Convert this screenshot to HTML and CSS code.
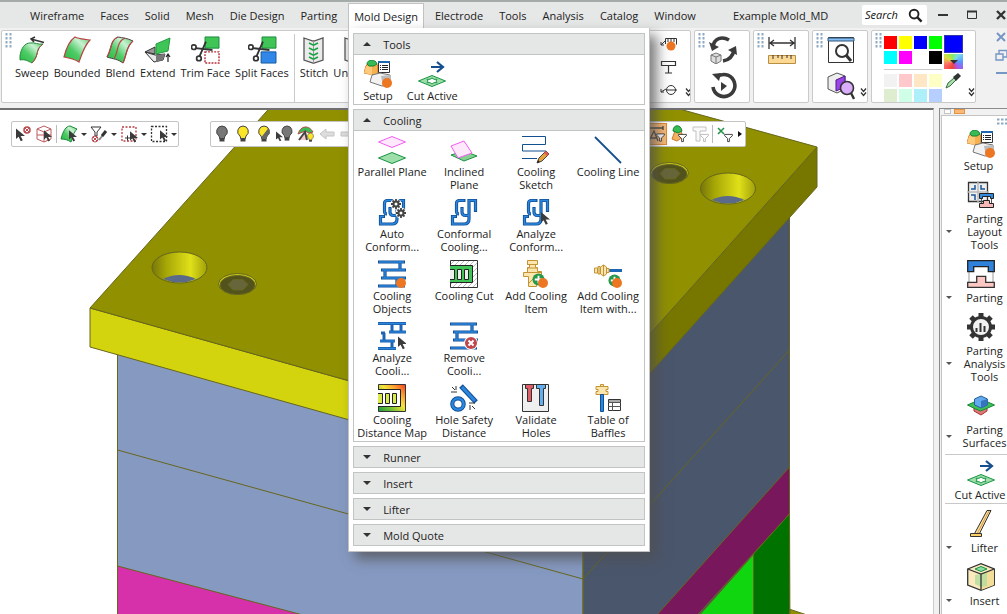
FILE: index.html
```html
<!DOCTYPE html>
<html lang="en">
<head>
<meta charset="utf-8">
<meta name="viewport" content="width=device-width, initial-scale=1">
<title>Example Mold_MD</title>
<link rel="stylesheet" href="styles.css">
</head>
<body>
<svg class="sprites" aria-hidden="true">
  <defs>
    <linearGradient id="leaf" x1="0" y1="1" x2="1" y2="0"><stop offset="0" stop-color="#25b83f"/><stop offset=".4" stop-color="#4ecb66"/><stop offset=".7" stop-color="#c8f2d1"/><stop offset="1" stop-color="#5ccb73"/></linearGradient>
    <linearGradient id="heat" x1="0" y1="1" x2="1" y2="0"><stop offset="0" stop-color="#149b3c"/><stop offset=".3" stop-color="#7cc234"/><stop offset=".55" stop-color="#f6e53a"/><stop offset=".75" stop-color="#fba030"/><stop offset="1" stop-color="#f33b22"/></linearGradient>
    <linearGradient id="bore"><stop offset="0" stop-color="#77770a"/><stop offset=".25" stop-color="#a5a506"/><stop offset=".7" stop-color="#e0e019"/><stop offset="1" stop-color="#a0a00a"/></linearGradient>
    <pattern id="hatch" width="5" height="5" patternUnits="userSpaceOnUse"><path d="M-1 6L6-1" stroke="#aaa" stroke-width=".8"/></pattern>
    <symbol id="cursor" viewBox="0 0 9 13"><path d="M0 0v10.500l2.600-2.200 2.200 4.400 2-1-2.200-4.200H9z" fill="#3b3b3b"/></symbol>
    <symbol id="sweep" viewBox="0 0 28 28"><path d="M2 20C3 12 7 7 12 7c5-1 8 2 13 1-5 4-5 6-6 10-1 4-3 7-5 9-4-2-7-4-12-3z" fill="url(#leaf)" stroke="#248b3a"/><path d="M25 8c-5 4-5 6-6 10-1 4-3 7-5 9" fill="none" stroke="#b84444"/><path d="M13 3l13 3.500M17 1l-4 2 3 3" stroke="#333" stroke-width="1.500" fill="none"/></symbol>
    <symbol id="bounded" viewBox="0 0 28 28"><path d="M1 21C3 13 6 5 12 1c4 2 9 2 15 3-6 6-8 14-11 22-5-3-9-4-15-5z" fill="url(#leaf)" stroke="#b84444" stroke-width="1.200"/></symbol>
    <symbol id="blend" viewBox="0 0 28 28"><path d="M1 21C6 13 4 4 12 1c5 1 9 1 15 4-7 6-6 13-10 22-5-4-10-4-16-6z" fill="url(#leaf)" stroke="#444"/><path d="M1 21C6 13 4 4 12 1M8 23C13 15 10 6 19 2M17 27c4-9 3-16 10-22" fill="none" stroke="#b84444" stroke-width="1.200"/></symbol>
    <symbol id="extend" viewBox="0 0 28 28"><path d="M1 16l10-5v7z" fill="#999" stroke="#333"/><path d="M1 16l10 3 10-1-2 6-9 2z" fill="#e8e8e8" stroke="#333"/><path d="M12 26v-7l9-1-2 6z" fill="#777"/><path d="M12 8L26 2l-2 13-12 3z" fill="#3fc458" stroke="#229a3d"/><path d="M24 26v-7m-2 2l2-3 2 3" stroke="#222" fill="none" stroke-width="1.200"/></symbol>
    <symbol id="scissors" viewBox="0 0 28 28"><circle cx="3" cy="12" r="2.500" fill="none" stroke="#333" stroke-width="1.800"/><circle cx="8.500" cy="24" r="2.500" fill="none" stroke="#333" stroke-width="1.800"/><path d="M5 13l18 2M9 22l7-16" stroke="#333" stroke-width="2" fill="none"/></symbol>
    <symbol id="trim" viewBox="0 0 32 30"><path d="M16 1h15v12H16z" fill="#41c456" stroke="#16893a"/><use href="#scissors" width="28" height="28" x="1"/><path d="M16 17h15v12H16z" fill="#fff" stroke="#b42c35" stroke-width="1.500" stroke-dasharray="2 1.300"/></symbol>
    <symbol id="split" viewBox="0 0 32 30"><path d="M16 1h15v12H16z" fill="#41c456" stroke="#16893a"/><use href="#scissors" width="28" height="28" x="1"/><path d="M15 17h16v12H15z" fill="#3087e8" stroke="#14569d"/></symbol>
    <symbol id="stitch" viewBox="0 0 28 28"><path d="M4 2l9 3h1l9-3v22l-9 3h-1l-9-3z" fill="#eaeaea" stroke="#555" stroke-width="1.300"/><path d="M13.500 5v22" stroke="#999"/><path d="M9 7l4 2h1l4-2M9 12l4 2h1l4-2M9 17l4 2h1l4-2M9 21l4 2h1l4-2" fill="none" stroke="#18a342" stroke-width="1.600"/></symbol>
    <symbol id="setup" viewBox="0 0 28 28"><path d="M2 6l2-3h8l2 3v9l-4 0-10-2z" fill="#f6b14f" stroke="#c86c20"/><path d="M2 6l6 1 0 8-8-2z" fill="#ffc97b"/><path d="M3 4c0-5 9-5 10 0l-3 2H5z" fill="#38ba55" stroke="#188537"/><path d="M14.500 1.500h11v11h-11z" fill="#fff" stroke="#333"/><path d="M14 2h12" stroke="#2167ac" stroke-width="2"/><path d="M16 5.500h1m1 0h6m-8 2h1m1 0h6m-8 2h1m1 0h6" stroke="#222"/><path d="M8 15l8-2 10 2v10l-8 1-12-4z" fill="#f2f2f2" stroke="#777"/><path d="M17 16l9-1v9l-7 2z" fill="#bbb"/><circle cx="23" cy="23" r="5" fill="#ed7623"/></symbol>
    <symbol id="cut" viewBox="0 0 28 28"><path d="M13 7h12M19 2l6 5-6 5" fill="none" stroke="#164f8e" stroke-width="2.200"/><path d="M.500 21L14 15.500 27.500 21 14 26.500z" fill="#9edea8" stroke="#159443"/><path d="M14 18l2 1.300h3L18 21l1 1.700h-3L14 24l-2-1.300H9L10 21l-1-1.700h3z" fill="#fff" stroke="#159443"/></symbol>
    <symbol id="parallel" viewBox="0 0 28 28"><path d="M.500 6L14 .500 27.500 6 14 11.500z" fill="#fde8fc" stroke="#f45bf1"/><path d="M.500 22L14 16.500 27.500 22 14 27.500z" fill="#9edea8" stroke="#159443"/></symbol>
    <symbol id="inclined" viewBox="0 0 28 28"><path d="M1 19l13-4 13 5-13 5z" fill="#84cf91" stroke="#159443"/><path d="M1 10l13-5 8 12-14 5z" fill="#fde8fc" stroke="#f45bf1"/></symbol>
    <symbol id="sketch" viewBox="0 0 28 28"><path d="M0 .500h23.500v8h-23V15H24M0 22.500h15" fill="none" stroke="#12508f"/><path d="M15 27l2-5 7-7 3 3-7 7z" fill="#e8a43a" stroke="#444"/><path d="M24 15l3 3-2 2-3-3z" fill="#e05c53"/><path d="M15 27l1-3 2 2z" fill="#222"/></symbol>
    <symbol id="line" viewBox="0 0 28 28"><path d="M1 1l26 26" stroke="#164f8e" stroke-width="1.800"/></symbol>
    <symbol id="coil" viewBox="0 0 28 28"><g fill="none" stroke="#114f96" stroke-width="3.200"><path d="M25.500 14V2.500H19V21q0 5-5 5H2.500V18.500H7"/><path d="M15.500 2.500H9.500q-3 0-3 3V13q0 3 2.500 3"/><path d="M12 9v5q0 3.500 3.500 3.500H19"/></g><g fill="none" stroke="#2b86de" stroke-width="1.500"><path d="M25.500 13V2.500H19V21q0 5-5 5H2.500V18.500H6"/><path d="M14.500 2.500H9.500q-3 0-3 3V13q0 3 2 3"/><path d="M12 10v4q0 3.500 3.500 3.500H19"/></g></symbol>
    <symbol id="gear" viewBox="0 0 10 10"><path d="M5 0v10M0 5h10M1.500 1.500l7 7M8.500 1.500l-7 7" stroke="#444" stroke-width="1.800"/><circle cx="5" cy="5" r="2.500" fill="#fff" stroke="#444" stroke-width="2"/></symbol>
    <symbol id="autocoil" viewBox="0 0 28 28"><use href="#coil" width="28" height="28"/><circle cx="18" cy="6" r="5.500" fill="#fff"/><circle cx="23" cy="15" r="5.500" fill="#fff"/><use href="#gear" x="13" y="1" width="10" height="10"/><use href="#gear" x="18" y="10" width="10" height="10"/></symbol>
    <symbol id="anacoil" viewBox="0 0 28 28"><use href="#coil" width="28" height="28"/><use href="#cursor" x="19" y="14" width="9" height="13"/></symbol>
    <symbol id="pipes" viewBox="0 0 28 28"><path d="M0 2h27M3 10h25M3 18h25M0 26h27M22 2v8M7 10v8M19 18v8" stroke="#114f96" stroke-width="3.200" fill="none"/><path d="M1 2h25M4 10h23M4 18h23M1 26h25M22 2v8M7 10v8M19 18v8" stroke="#2b86de" stroke-width="1.400" fill="none"/></symbol>
    <symbol id="objects" viewBox="0 0 28 28"><use href="#pipes" width="28" height="28"/><circle cx="23" cy="23" r="5" fill="#ed7623"/></symbol>
    <symbol id="anapipes" viewBox="0 0 28 28"><path d="M0 1.500h28M11 10h17M2 19h15M0 26.500h18M23 2v8M14 2v8M6 11v8M14 19v8M3 11h4" stroke="#1d65b3" stroke-width="3" fill="none"/><path d="M0 1.500h28M11 10h17M2 19h15M0 26.500h18" stroke="#2b86de" stroke-width="1"/><use href="#cursor" x="20" y="14" width="9" height="14"/></symbol>
    <symbol id="rempipes" viewBox="0 0 28 28"><use href="#pipes" width="28" height="28"/><circle cx="21" cy="21" r="7" fill="#fff"/><circle cx="21" cy="21" r="6" fill="#be474c"/><path d="M18.500 18.500l5 5m0-5l-5 5" stroke="#fff" stroke-width="2"/></symbol>
    <symbol id="coolcut" viewBox="0 0 28 28"><path d="M.500.500h27v27H.500z" fill="#fff"/><path d="M.500.500h27v27H.500z" fill="url(#hatch)" stroke="#333"/><path d="M0 5.500h22.500v17H0" fill="#41c456" stroke="#222"/><path d="M0 9.500h4.500v10H0M7.500 9.500h4v10h-4zM14.500 9.500h4v10h-4z" fill="#eee" stroke="#222"/></symbol>
    <symbol id="plus" viewBox="0 0 14 14"><circle cx="7" cy="7" r="6.500" fill="#28974a"/><path d="M7 3v8M3 7h8" stroke="#fff" stroke-width="2"/></symbol>
    <symbol id="additem" viewBox="0 0 28 28"><path d="M5.500.500h10v4h-2v3h2v4h4v5h-5v10h-8v-10h-5v-4h4v-5h2v-3h-2z" fill="#fbe6b0" stroke="#c39333"/><path d="M5 4.500h10M5 8h10M2 12.500h17M7 23l7-7" stroke="#c39333"/><use href="#plus" x="10" y="13" width="13" height="13"/><circle cx="21" cy="23" r="5" fill="#ed7623"/></symbol>
    <symbol id="addwith" viewBox="0 0 28 28"><path d="M14 10.500h14" stroke="#1d66b5" stroke-width="3"/><path d="M.500 8h3v5h-3zM4 6.500h2V14H4zM7 8.500h8v4H7z" fill="#fbe6b0" stroke="#c39333"/><path d="M6.500 7l3-2 3 2v7l-3 2-3-2z" fill="#fbe6b0" stroke="#c39333"/><path d="M9.500 5v11" stroke="#c39333"/><use href="#plus" x="14" y="14" width="13" height="13"/><circle cx="23" cy="23" r="5" fill="#ed7623"/></symbol>
    <symbol id="distmap" viewBox="0 0 28 28"><path d="M.500.500h27v27H.500z" fill="url(#heat)" stroke="#333"/><path d="M0 5.500h22.500v17H0" fill="#fff" stroke="#222"/><path d="M0 9.500h4.500v10H0M7.500 9.500h4v10h-4zM14.500 9.500h4v10h-4z" fill="#dbe94a" stroke="#222"/></symbol>
    <symbol id="safety" viewBox="0 0 28 28"><path d="M11 2l15 16" stroke="#114f96" stroke-width="5"/><path d="M12 3l13 14" stroke="#2b86de" stroke-width="3"/><circle cx="8" cy="20" r="5.700" fill="#fff" stroke="#114f96" stroke-width="4.200"/><circle cx="8" cy="20" r="5.700" fill="none" stroke="#2b86de" stroke-width="2.300"/><path d="M1 8h6M6 2v4M2 3l3 3M19 19h6M20 21v5M22 22l3 3" stroke="#333"/></symbol>
    <symbol id="validate" viewBox="0 0 28 28"><path d="M.500.500h26v27H.500z" fill="#efefef" stroke="#333"/><path d="M3.500.500h8v4h-2v13h-4V4.500h-2z" fill="#de5d67" stroke="#333"/><path d="M14.500.500h9v4h-2v17h-4v-17h-3z" fill="#64aeed" stroke="#333"/></symbol>
    <symbol id="baffles" viewBox="0 0 28 28"><path d="M2 2.500h12v3h-2v2h2v3H2v-3h2v-2H2zM6.500.500h3v2h-3z" fill="#fbe6b0" stroke="#c39333"/><path d="M6.500 10.500h3v17h-3z" fill="#2b86de" stroke="#114f96"/><path d="M14.500 15.500h12v11h-12z" fill="#fff" stroke="#333"/><path d="M15 17h11" stroke="#aaa" stroke-width="2"/><path d="M14 18.500h13M14 22.500h13M18.500 18v9" stroke="#555"/></symbol>
    <symbol id="layout" viewBox="0 0 28 28"><path d="M1.500 1.500h19v19h-19z" fill="#eee" stroke="#333" stroke-width="1.300"/><path d="M11 0v22M0 11h22" stroke="#bbb" stroke-width="1.500"/><path d="M4 8h4V4M14 4v4h4M4 14h4v5" stroke="#1b5796" stroke-width="1.500" fill="none"/><path d="M12.500 12.500h14v5h-3v-2h-8v2h-3z" fill="#338be0" stroke="#222"/><path d="M14.500 18v4m10-4v4" stroke="#555"/><path d="M12.500 26.500v-4h4v-3h6v3h4v4z" fill="#f9b8b8" stroke="#222"/></symbol>
    <symbol id="parting" viewBox="0 0 28 28"><path d="M2 12v11M26 12v11" stroke="#999"/><path d="M.700.700h26.600v11h-6v-5H6.700v5h-6z" fill="#2f82dc" stroke="#222" stroke-width="1.300"/><path d="M.700 27.300v-5h9v-6h9v6h8.600v5z" fill="#fdc7c3" stroke="#333" stroke-width="1.300"/></symbol>
    <symbol id="analysis" viewBox="0 0 28 28"><path d="M14 0v28M0 14h28M4 4l20 20M24 4L4 24" stroke="#333" stroke-width="5"/><circle cx="14" cy="14" r="9.500" fill="#f2f2f2" stroke="#333" stroke-width="3"/><path d="M9.500 15v4M13.500 10v9M17.500 13v6" stroke="#333" stroke-width="2"/></symbol>
    <symbol id="surfaces" viewBox="0 0 28 28"><path d="M7 15h13v4l-6 4-7-4z" fill="#e47776" stroke="#a33"/><path d="M.500 13l9-4h9l9 4-9 4-5 2-5-2z" fill="#3fbf57" stroke="#188636"/><path d="M7.500 7l6.500-3 6.500 3v6L14 16l-6.500-3z" fill="#63a9ed" stroke="#285f9c"/><path d="M14 9v7l6.500-3V7z" fill="#3476bd"/></symbol>
    <symbol id="lifter" viewBox="0 0 28 28"><path d="M20 .500h4L12 24.500H7z" fill="#fcdc9b" stroke="#333"/><path d="M22 1L10 24" stroke="#d39d47"/><path d="M3.500 23.500h11v3h-11z" fill="#ffcf67" stroke="#333"/></symbol>
    <symbol id="insert" viewBox="0 0 28 28"><path d="M.700 6L14 .700 27.300 6v16L14 27.300.700 22z" fill="#fceabf" stroke="#333" stroke-width="1.300"/><path d="M14 11v16L27 22V6z" fill="#f4dd98"/><path d="M8 12l6-1 6-2v14l-6 1-6-3z" fill="#b4dda0" opacity=".85"/><path d="M.700 6L14 11l13.300-5M14 11v16" stroke="#333" fill="none" stroke-width="1.300"/><path d="M8 6l6-2.500L20 6l-6 2.500z" fill="#8cdba0" stroke="#17964a"/></symbol>
    <symbol id="bulb" viewBox="0 0 16 18"><path d="M8 1a5.500 5.500 0 0 0-3 10l1 3h4l1-3A5.500 5.500 0 0 0 8 1z" fill="currentColor" stroke="#444"/><path d="M5.500 13h5v3.500h-5z" fill="#444"/></symbol>
    <symbol id="funnel" viewBox="0 0 10 10"><path d="M.700 1h8.600v1.500L6 5.500V9H4V5.500L.700 2.500z" fill="#fff" stroke="#333"/></symbol>
    <symbol id="chevrons" viewBox="0 0 7 9"><path d="M1 .500l2.500 3L6 .500M1 4.500l2.500 3 2.500-3" stroke="#333" stroke-width="1.300" fill="none"/></symbol>
    <symbol id="grip" viewBox="0 0 7 15"><path d="M1.500 0v15M5.500 0v15" stroke="#8daac2" stroke-width="2" stroke-dasharray="2.500 1.500"/></symbol>
    <symbol id="lens" viewBox="0 0 16 16"><circle cx="6.500" cy="6.500" r="4.700" fill="none" stroke="currentColor" stroke-width="2"/><path d="M10 10l4.500 4.500" stroke="currentColor" stroke-width="2.500"/></symbol>
  </defs>
</svg>

<div class="app">
  <header class="titlebar">
    <nav class="menu" aria-label="Main menu">
      <button>Wireframe</button><button>Faces</button><button>Solid</button><button>Mesh</button><button>Die Design</button><button>Parting</button>
      <div class="menu-open">
        <button class="active" aria-expanded="true">Mold Design</button>
        <div class="dropdown">
          <section class="panel">
            <button class="panel-head" aria-expanded="true"><i class="tri up"></i>Tools</button>
            <div class="panel-body tools-row">
              <button class="tool"><svg><use href="#setup"/></svg>Setup</button>
              <button class="tool"><svg><use href="#cut"/></svg>Cut Active</button>
            </div>
          </section>
          <section class="panel">
            <button class="panel-head" aria-expanded="true"><i class="tri up"></i>Cooling</button>
            <div class="panel-body tool-grid">
              <button class="tool"><svg><use href="#parallel"/></svg>Parallel Plane</button>
              <button class="tool"><svg><use href="#inclined"/></svg>Inclined<br>Plane</button>
              <button class="tool"><svg><use href="#sketch"/></svg>Cooling<br>Sketch</button>
              <button class="tool"><svg><use href="#line"/></svg>Cooling Line</button>
              <button class="tool"><svg><use href="#autocoil"/></svg>Auto<br>Conform...</button>
              <button class="tool"><svg><use href="#coil"/></svg>Conformal<br>Cooling...</button>
              <button class="tool"><svg><use href="#anacoil"/></svg>Analyze<br>Conform...</button>
              <button class="tool first"><svg><use href="#objects"/></svg>Cooling<br>Objects</button>
              <button class="tool"><svg><use href="#coolcut"/></svg>Cooling Cut</button>
              <button class="tool"><svg><use href="#additem"/></svg>Add Cooling<br>Item</button>
              <button class="tool"><svg><use href="#addwith"/></svg>Add Cooling<br>Item with...</button>
              <button class="tool"><svg><use href="#anapipes"/></svg>Analyze<br>Cooli...</button>
              <button class="tool"><svg><use href="#rempipes"/></svg>Remove<br>Cooli...</button>
              <button class="tool first"><svg><use href="#distmap"/></svg>Cooling<br>Distance Map</button>
              <button class="tool"><svg><use href="#safety"/></svg>Hole Safety<br>Distance</button>
              <button class="tool"><svg><use href="#validate"/></svg>Validate<br>Holes</button>
              <button class="tool"><svg><use href="#baffles"/></svg>Table of<br>Baffles</button>
            </div>
          </section>
          <button class="panel-head"><i class="tri"></i>Runner</button>
          <button class="panel-head"><i class="tri"></i>Insert</button>
          <button class="panel-head"><i class="tri"></i>Lifter</button>
          <button class="panel-head"><i class="tri"></i>Mold Quote</button>
        </div>
      </div>
      <button>Electrode</button><button>Tools</button><button>Analysis</button><button>Catalog</button><button>Window</button>
    </nav>
    <span class="doc-title">Example Mold_MD</span>
    <label class="search"><input type="text" placeholder="Search" aria-label="Search"><svg><use href="#lens"/></svg></label>
    <div class="window-buttons">
      <button aria-label="Minimize"><svg viewBox="0 0 12 12"><path d="M1 6h10" stroke="#333" stroke-width="2"/></svg></button>
      <button aria-label="Maximize"><svg viewBox="0 0 12 12"><path d="M1.500 2.500h9v7h-9z" fill="none" stroke="#333"/><path d="M1 2.500h10" stroke="#333" stroke-width="2"/></svg></button>
      <button aria-label="Close"><svg viewBox="0 0 12 12"><path d="M2 2l8 8m0-8l-8 8" stroke="#333" stroke-width="2.400"/></svg></button>
    </div>
  </header>

  <div class="ribbon">
    <div class="group faces">
      <svg class="grip"><use href="#grip"/></svg>
      <button class="tool"><svg><use href="#sweep"/></svg>Sweep</button>
      <button class="tool"><svg><use href="#bounded"/></svg>Bounded</button>
      <button class="tool"><svg><use href="#blend"/></svg>Blend</button>
      <button class="tool"><svg><use href="#extend"/></svg>Extend</button>
      <button class="tool"><svg class="wide"><use href="#trim"/></svg>Trim Face</button>
      <button class="tool"><svg class="wide"><use href="#split"/></svg>Split Faces</button>
      <span class="rule"></span>
      <button class="tool"><svg><use href="#stitch"/></svg>Stitch</button>
      <button class="tool"><svg><use href="#stitch"/></svg>Unstitch</button>
    </div>
    <div class="group notes">
      <div class="stack notes-stack">
        <button aria-label="Dimension"><svg viewBox="0 0 12 18"><path d="M8 2v14M0 8h8M4 5l4 3-4 3" stroke="#666" fill="none" stroke-width="1.500"/></svg></button>
        <button aria-label="Text"><svg viewBox="0 0 12 28"><path d="M0 2h10" stroke="#3e89cb" stroke-width="2"/><path d="M0 27L5 9l4 18z" fill="#444"/></svg></button>
      </div>
      <div class="stack notes-stack">
        <button aria-label="Note"><svg viewBox="0 0 17 16"><path d="M5.500 8V2.500h11v6M8 3v3m3-3v3m3-3v3M6 4L1 9m0-3v3h3" fill="none" stroke="#333"/><circle cx="11" cy="10" r="4.500" fill="#ed7623"/></svg></button>
        <button aria-label="Label"><svg viewBox="0 0 17 16"><path d="M1.500 2.500h14v4h-14zM8.500 7v7M5 14h7" fill="#fff" stroke="#333" stroke-width="1.200"/></svg></button>
        <button aria-label="Balloon"><svg viewBox="0 0 17 16"><circle cx="11" cy="8" r="4.500" fill="#fff" stroke="#333"/><path d="M6 8h11M6 7l-5 3m0-3v3h3" stroke="#333" fill="none"/></svg></button>
      </div>
      <svg class="more"><use href="#chevrons"/></svg>
    </div>
    <div class="group small">
      <svg class="grip"><use href="#grip"/></svg>
      <div class="stack">
        <button aria-label="Rotate view"><svg viewBox="0 0 28 28"><path d="M4 11C5 2 13 0 20 4M25 14c-1 6-5 10-11 11" stroke="#3b3b3b" stroke-width="3.600" fill="none"/><path d="M0 6l3 9 7-4zM19 14l8-4 1 9z" fill="#3b3b3b"/><path d="M2 19l5-2 5 2v6l-5 3-5-3z" fill="#ddd" stroke="#777"/><path d="M2 19l5 2 5-2M7 21v7" stroke="#777" fill="none"/></svg></button>
        <button aria-label="Regenerate"><svg viewBox="0 0 28 28"><path d="M8 5a11 11 0 1 1-4 10" stroke="#3b3b3b" stroke-width="3.600" fill="none"/><path d="M3 2l9-1-2 8z" fill="#3b3b3b"/><path d="M12 10l6 4-6 5z" fill="#3b3b3b"/></svg></button>
      </div>
    </div>
    <div class="group small">
      <svg class="grip"><use href="#grip"/></svg>
      <div class="stack">
        <button aria-label="Measure"><svg viewBox="0 0 28 28"><path d="M1 1v12M27 1v12M2 7h24M6 4L2 7l4 3M22 4l4 3-4 3" stroke="#333" stroke-width="1.300" fill="none"/><path d="M.500 19.500h27v8H.500z" fill="#fbd894" stroke="#b98f41"/><path d="M5 19v4m5-4v3m4-3v4m5-4v3m4-3v4" stroke="#333"/></svg></button>
      </div>
    </div>
    <div class="group small">
      <svg class="grip"><use href="#grip"/></svg>
      <div class="stack">
        <button aria-label="Zoom window"><svg viewBox="0 0 28 28"><path d="M1.500 1.500h25v25h-25z" fill="#fff" stroke="#333"/><path d="M1 2h26v3H1z" fill="#86bdf4" stroke="#357"/><circle cx="15" cy="15" r="6" fill="#fff" stroke="#333" stroke-width="2"/><path d="M19 19l5 6" stroke="#333" stroke-width="3"/></svg></button>
        <button aria-label="Inspect"><svg viewBox="0 0 28 28"><path d="M1 5l9-4 8 3v13l-8 4-9-4z" fill="#ededed" stroke="#555"/><path d="M9 8l9-4v11l-9 4z" fill="#9a44e8" stroke="#4f1b87"/><circle cx="20" cy="16" r="6.500" fill="#d9adfa" stroke="#333" stroke-width="1.600"/><path d="M24 21l3 6" stroke="#333" stroke-width="2.400"/></svg></button>
      </div>
      <svg class="more"><use href="#chevrons"/></svg>
    </div>
    <div class="group colors">
      <svg class="grip"><use href="#grip"/></svg>
      <div class="palette">
        <button class="red" aria-label="Red"></button><button class="yellow" aria-label="Yellow"></button><button class="blue" aria-label="Blue"></button><button class="green" aria-label="Green"></button>
        <button class="cyan" aria-label="Cyan"></button><button class="magenta" aria-label="Magenta"></button><button class="white" aria-label="White"></button><button class="black" aria-label="Black"></button>
        <span class="palette-rule"></span>
        <button class="p1" aria-label="Pale gray"></button><button class="p2" aria-label="Pale red"></button><button class="p3" aria-label="Pale orange"></button><button class="p4" aria-label="Pale yellow"></button>
        <button class="p5" aria-label="Pale olive"></button><button class="p6" aria-label="Pale green"></button><button class="p7" aria-label="Pale cyan"></button><button class="p8" aria-label="Pale blue"></button>
      </div>
      <div class="current">
        <button class="chosen" aria-label="Current color"></button>
        <button class="wheel" aria-label="More colors"><i class="tri"></i></button>
        <button class="dropper" aria-label="Pick color"><svg viewBox="0 0 16 16"><path d="M1 15l2-5 6-5 2 2-6 6z" fill="#a9ddad" stroke="#38713d"/><path d="M8 4l5-4 3 3-5 5z" fill="#333"/></svg></button>
      </div>
      <svg class="more"><use href="#chevrons"/></svg>
    </div>
    <div class="mdi">
      <button aria-label="Close document"><svg viewBox="0 0 12 12"><path d="M2 2l8 8m0-8l-8 8" stroke="#7696c4" stroke-width="2"/></svg></button>
      <button aria-label="Restore document"><svg viewBox="0 0 12 12"><path d="M1 5h7v6H1zM4 5V1.500h8V8H8" stroke="#7696c4" stroke-width="1.400" fill="none"/></svg></button>
      <button aria-label="Minimize document"><svg viewBox="0 0 12 12"><path d="M1 6h11" stroke="#7696c4" stroke-width="2"/></svg></button>
    </div>
  </div>

  <div class="workspace">
    <main class="viewport">
      <svg class="scene" viewBox="0 110 933 504" preserveAspectRatio="xMinYMin slice" role="img" aria-label="Mold model">
        <g stroke="#66661e" stroke-width="1">
          <path d="M780 606l27 9h-27z" fill="#909000"/>
          <path d="M117.500 340V640h466V480z" fill="#8699c1"/>
          <path d="M583 430L789.500 200V640H583z" fill="#4a566c"/>
          <path d="M789.500 467L630 645h40L789.500 514z" fill="#78175c"/>
          <path d="M789.500 514L680 637h110z" fill="#0fd60f"/>
          <path d="M789.500 514L753.500 554v90h36z" fill="#007200"/>
          <path d="M117.500 566V640h280z" fill="#d631ab"/>
          <path d="M117.500 450L583 579 789.500 350M583 480v140" fill="none"/>
          <path d="M90 308L556 439v39L90 347z" fill="#d4d40e"/>
          <path d="M556 439L817 147v40L556 478z" fill="#777700"/>
          <path d="M90 308L275 102H654L817 147 556 439z" fill="#909000"/>
          <ellipse cx="179.500" cy="267.500" rx="27.500" ry="15.500" fill="url(#bore)"/>
          <path d="M163 279q16-8 33 0-16 7-33 0z" fill="#5b6a88" stroke="none"/>
          <ellipse cx="728" cy="188.500" rx="27.500" ry="15.500" fill="url(#bore)"/>
          <path d="M711.500 200q16-8 33 0-16 7-33 0z" fill="#5b6a88" stroke="none"/>
          <g id="screw"><ellipse cx="237.500" cy="284" rx="19" ry="10.500" fill="#c9c91a"/><ellipse cx="237.500" cy="285" rx="17.500" ry="9.500" fill="#52521c"/><path d="M228 284.500l5-5h10l5 5-5 5.500h-10z" fill="#66663a"/></g>
          <use href="#screw" x="432" y="-111"/>
        </g>
      </svg>
      <div class="overlay">
        <div class="floatbar select-bar">
          <button aria-label="Pick"><svg viewBox="0 0 18 18"><use href="#cursor" x="2" y="3" width="9" height="14"/><circle cx="13" cy="5" r="3" fill="#fff" stroke="#b94b50" stroke-width="1.500"/><path d="M11 3l4 4m0-4l-4 4" stroke="#b94b50"/></svg></button>
          <button class="boxed" aria-label="Pick entity"><svg viewBox="0 0 18 18"><path d="M2 4l7-3 7 3v10l-7 3-7-3zM2 4l7 3 7-3M9 7v10M2 10h14" fill="none" stroke="#be5a60"/><use href="#cursor" x="9" y="5" width="8" height="12"/></svg></button>
          <button class="drop" aria-label="Pick faces"><svg viewBox="0 0 18 18"><path d="M1 14C3 6 6 1 10 1l7 3c-4 4-4 8-6 13-3-2-6-3-10-3z" fill="url(#leaf)" stroke="#1b8838"/><use href="#cursor" x="9" y="5" width="8" height="12"/></svg><i class="tri"></i></button>
          <button class="drop" aria-label="Filter"><svg viewBox="0 0 18 18"><path d="M1 2h10L7 7v4H5V7z" fill="#fff" stroke="#333"/><circle cx="5" cy="14" r="3" fill="none" stroke="#b94b50"/><path d="M3 12l4 4m0-4l-4 4" stroke="#b94b50"/><path d="M9 15l4-5" stroke="#888" stroke-width="2"/><path d="M12 11l4-5" stroke="#333" stroke-width="3"/></svg><i class="tri"></i></button>
          <button class="drop" aria-label="Add by window"><svg viewBox="0 0 18 18"><path d="M2 2h14v14H2z" fill="none" stroke="#b93b40" stroke-width="1.300" stroke-dasharray="2 1.500"/><path d="M5 13h5M7.500 10.500v5" stroke="#333"/><use href="#cursor" x="10" y="6" width="8" height="12"/></svg><i class="tri"></i></button>
          <button class="drop" aria-label="Pick by window"><svg viewBox="0 0 18 18"><path d="M1.500 1.500h15v15h-15z" fill="none" stroke="#333" stroke-width="1.300" stroke-dasharray="2 1.500"/><use href="#cursor" x="10" y="5" width="8" height="12"/></svg><i class="tri"></i></button>
        </div>
        <div class="floatbar show-bar">
          <button class="off" aria-label="Hide"><svg><use href="#bulb"/></svg></button>
          <button class="on" aria-label="Show"><svg><use href="#bulb"/></svg></button>
          <button class="on" aria-label="Toggle"><svg viewBox="0 0 16 18"><use href="#bulb" width="16" height="18"/><path d="M12.500 3l-7 9 1 2h4l1-3q4-3 1-8z" fill="#666"/></svg></button>
          <button class="off" aria-label="Hide picked"><svg viewBox="0 0 18 18"><use href="#bulb" x="3" width="16" height="17"/><use href="#cursor" x="0" y="6" width="7" height="11"/></svg></button>
          <button class="on" aria-label="Show all"><svg viewBox="0 0 18 18"><path d="M1 9C4 0 12 0 16 7L12 8 8 6z" fill="#3bbd56" stroke="#bd4444"/><path d="M2 15l6-8 2 8" stroke="#444" stroke-width="2" fill="#f3cccc"/><use href="#bulb" x="9" y="7" width="9" height="11"/></svg></button>
          <button aria-label="Previous"><svg viewBox="0 0 18 18"><path d="M2 9l6-5v3h8v4H8v3z" fill="#ddd" stroke="#c4c4c4"/></svg></button>
          <button aria-label="Next"><svg viewBox="0 0 18 18"><path d="M2 7h14v4H2z" fill="#ddd" stroke="#c4c4c4"/></svg></button>
          <span class="fill"></span>
          <button class="picked" aria-label="Filter text"><svg viewBox="0 0 18 18"><path d="M2 1v4m14-4v4M2 3h14M2 16L7 6l4 10M4 13h6" stroke="#444" fill="none" stroke-width="1.300"/><use href="#funnel" x="9" y="8" width="9" height="9"/></svg></button>
          <button aria-label="Filter parts"><svg viewBox="0 0 18 18"><path d="M2 14l3-8h6l2 6-6 4z" fill="#f3b263" stroke="#ce782b"/><path d="M3 6c0-7 8-7 9 0l-4 2z" fill="#38ba55" stroke="#188537"/><use href="#funnel" x="8" y="8" width="9" height="10"/></svg></button>
          <button class="faded" aria-label="Filter sections"><svg viewBox="0 0 18 18"><path d="M2 2h13v4H9v10H5V6H2z" fill="#eee" stroke="#555"/><use href="#funnel" x="9" y="8" width="9" height="10"/></svg></button>
          <span class="bar-rule"></span>
          <button aria-label="Filter points"><svg viewBox="0 0 18 18"><path d="M2 3l6 6m0-6L2 9" stroke="#209344" stroke-width="1.500"/><use href="#funnel" x="8" y="8" width="9" height="10"/></svg></button>
          <i class="tri side"></i>
        </div>
      </div>
    </main>
    <aside class="sidebar">
      <div class="side-tabs"><i></i><i class="lit"></i></div>
      <div class="side-panel">
        <svg class="side-grip" viewBox="0 0 10 8"><path d="M0 1.500h10M0 5.500h10" stroke="#8daac2" stroke-width="2" stroke-dasharray="2.500 1.500"/></svg>
        <button class="side-tool plain"><svg><use href="#setup"/></svg><span>Setup</span></button>
        <button class="side-tool"><svg><use href="#layout"/></svg><span>Parting<br>Layout<br>Tools</span><i class="tri"></i></button>
        <button class="side-tool"><svg><use href="#parting"/></svg><span>Parting</span><i class="tri"></i></button>
        <button class="side-tool"><svg><use href="#analysis"/></svg><span>Parting<br>Analysis<br>Tools</span><i class="tri"></i></button>
        <button class="side-tool"><svg><use href="#surfaces"/></svg><span>Parting<br>Surfaces</span><i class="tri"></i></button>
        <button class="side-tool plain ruled"><svg><use href="#cut"/></svg><span>Cut Active</span></button>
        <button class="side-tool"><svg><use href="#lifter"/></svg><span>Lifter</span><i class="tri"></i></button>
        <button class="side-tool"><svg><use href="#insert"/></svg><span>Insert</span><i class="tri"></i></button>
      </div>
    </aside>
  </div>
</div>
</body>
</html>
```
FILE: styles.css
```css
* { box-sizing: border-box; }

body {
  margin: 0;
  font: 11px/13px "Open Sans", "Noto Sans", sans-serif;
  color: #222;
  background: #f1f1f2;
}

button {
  margin: 0;
  padding: 0;
  border: 0;
  background: none;
  color: inherit;
  font: inherit;
  white-space: nowrap;
}

svg { display: block; flex: none; }
.sprites { position: absolute; width: 0; height: 0; }

.app {
  display: flex;
  flex-direction: column;
  height: 100vh;
  overflow: hidden;
}

.tri {
  display: block;
  flex: none;
  border: 4px solid transparent;
  border-top-color: #333;
  border-bottom: 0;
}
.tri.up {
  border-top: 0;
  border-bottom: 4px solid #333;
}

/* Title bar */
.titlebar {
  display: flex;
  flex: none;
  height: 28px;
  background: #e6e8e7;
  border-top: 2px solid #a5aba9;
}
.menu {
  display: flex;
  gap: 6px;
  padding: 1px 0 0 25px;
}
.menu > button, .menu-open > button {
  height: 25px;
  padding: 0 4px;
  border: 1px solid transparent;
}
.menu-open { position: relative; }
.menu-open > .active {
  padding: 0 5px;
  background: #fff;
  border-color: #c2c2c2;
  border-bottom: 0;
}
.doc-title {
  margin-left: 32px;
  padding-top: 7px;
  white-space: nowrap;
}
.search {
  display: flex;
  align-items: center;
  width: 65px;
  height: 20px;
  margin: 3px 10px 0 auto;
  padding: 0 4px 0 3px;
  background: #fff;
  border-radius: 2px;
}
.search input {
  flex: 1;
  min-width: 0;
  padding: 0;
  border: 0;
  outline: 0;
  font: italic 11px/16px "Open Sans", "Noto Sans", sans-serif;
}
.search input::placeholder { color: #111; opacity: 1; }
.search svg { width: 15px; height: 15px; }
.window-buttons {
  display: flex;
  gap: 17px;
  height: 26px;
}
.window-buttons svg { width: 12px; height: 12px; }

/* Mold Design menu */
.dropdown {
  position: absolute;
  z-index: 5;
  top: 25px;
  left: 0;
  display: flex;
  flex-direction: column;
  gap: 4px;
  width: 302px;
  padding: 5px 4px;
  background: #fff;
  border: 1px solid #c2c2c2;
  border-top: 0;
  box-shadow: 7px 7px 12px rgba(80, 80, 80, .75);
}
.panel-head {
  display: flex;
  align-items: center;
  gap: 12px;
  width: 100%;
  height: 22px;
  padding-left: 9px;
  background: #e5e7e6;
  border: 1px solid #c2c4c3;
}
.panel-body {
  padding: 5px 1px 2px 2px;
  border: 1px solid #c2c4c3;
  border-top: 0;
}
.tools-row { display: flex; gap: 14px; padding-left: 9px; }
.tool-grid {
  display: grid;
  grid-template-columns: repeat(4, 72px);
  grid-auto-rows: 55px;
  row-gap: 7px;
}
.tool-grid .first { grid-column: 1; }
.tool {
  display: block;
  align-self: start;
  text-align: center;
}
.tool svg { width: 28px; height: 28px; margin: 0 auto 1px; }
.tool-grid .tool { width: 72px; }

/* Ribbon */
.ribbon {
  display: flex;
  flex: none;
  gap: 3px;
  height: 80px;
  padding: 2px 0 5px 1px;
}
.group {
  display: flex;
  flex: none;
  background: #fff;
  border: 1px solid #c9cbca;
  border-radius: 2px;
  overflow: hidden;
}
.grip { width: 7px; height: 15px; margin: 2px 0 0 3px; }
.faces {
  flex: 1 1 0;
  min-width: 0;
  gap: 5px;
}
.faces .grip { margin-right: -2px; }
.faces .tool { padding-top: 5px; }
.faces .tool svg { margin-bottom: 2px; }
.faces .tool svg.wide { width: 30px; }
.rule {
  width: 1px;
  margin: 3px 0 0;
  background: #c9cbca;
}
.more {
  align-self: flex-end;
  width: 7px;
  height: 9px;
  margin: 0 0 5px auto;
}
.notes {
  width: 50px;
  gap: 8px;
}
.small { width: 56px; }
.stack {
  display: flex;
  flex-direction: column;
  gap: 8px;
  margin: 5px 0 0 4px;
}
.stack svg { width: 28px; height: 28px; }
.notes .stack { margin-left: 2px; }
.notes-stack svg { width: 17px; height: 16px; }
.notes-stack:first-child svg { width: 6px; height: 26px; }
.notes-stack { gap: 7px; }

.colors { width: 105px; }
.palette {
  display: grid;
  grid-template-columns: repeat(4, 13px);
  grid-template-rows: 13px 13px 6px 13px 13px;
  gap: 2px;
  height: 66px;
  margin: 5px 0 0 2px;
}
.palette-rule {
  grid-column: 1 / -1;
  height: 1px;
  margin: 3px 0 0;
  background: #c9c9c9;
}
.red { background: #f00; }
.yellow { background: #ff0; }
.blue { background: #00f; }
.green { background: #0f0; }
.cyan { background: #0ff; }
.magenta { background: #f0f; }
.white { background: #fff; }
.black { background: #000; }
.p1 { background: #f2f2f2; }
.p2 { background: #ffc8cb; }
.p3 { background: #ffe6c5; }
.p4 { background: #feffc5; }
.p5 { background: #deeccf; }
.p6 { background: #cfffe6; }
.p7 { background: #adf0fa; }
.p8 { background: #b7cfff; }
.current {
  display: flex;
  flex-direction: column;
  gap: 1px;
  width: 19px;
  margin: 4px 0 0 2px;
}
.chosen { height: 18px; background: #00f; border: 1px solid #33a; }
.wheel {
  display: grid;
  place-items: center;
  height: 15px;
  background: conic-gradient(from 90deg, #59f, #a5e, #e43, #f66, #dd4, #8e5, #7de, #59f);
}
.dropper svg { width: 16px; height: 16px; margin: 3px 0 0 1px; }

.mdi {
  display: flex;
  flex: none;
  flex-direction: column;
  gap: 6px;
  width: 28px;
  padding: 1px 0 0 16px;
}
.mdi svg { width: 12px; height: 12px; }

/* Workspace */
.workspace {
  display: flex;
  flex: 1;
  gap: 5px;
  min-height: 0;
}
.viewport {
  position: relative;
  flex: 1;
  min-width: 0;
  background: #fff;
  border-top: 2px solid #6f6f6f;
  border-right: 1px solid #ccc;
  overflow: hidden;
}
.scene { width: 100%; height: 100%; }
.overlay {
  position: absolute;
  top: 11px;
  left: 11px;
  display: flex;
  gap: 31px;
}
.floatbar {
  display: flex;
  align-items: center;
  height: 26px;
  padding: 0 2px;
  background: #fff;
  border: 1px solid #c4c4c4;
  border-radius: 2px;
}
.floatbar svg { width: 18px; height: 18px; }
.select-bar { width: 168px; gap: 3px; }
.boxed { padding-right: 3px; border-right: 1px solid #bbb; }
.drop { display: flex; align-items: center; gap: 3px; }
.drop .tri { border-width: 3px; border-bottom: 0; }
.show-bar { width: 536px; gap: 3px; }
.off { color: #777; }
.on { color: #fbe528; }
.fill { flex: 1; }
.picked { padding: 1px; background: #fbb975; border: 1px solid #e08a35; }
.faded { opacity: .35; }
.bar-rule { width: 1px; height: 18px; background: #bbb; }
.tri.side { transform: rotate(-90deg); border-width: 4px 3px 0; border-top-color: #111; }

/* Right toolbar */
.sidebar {
  flex: none;
  width: 68px;
  border-top: 1px solid #8b8b8b;
  border-left: 1px solid #8b8b8b;
  overflow: hidden;
}
.side-tabs { display: flex; gap: 3px; height: 6px; padding-left: 4px; }
.side-tabs i { width: 7px; height: 5px; background: #fff; border: 1px solid #c4c4c4; }
.side-tabs .lit { width: 11px; background: #fbb975; border-color: #df9448; }
.side-panel {
  display: flex;
  flex-direction: column;
  gap: 9px;
  min-height: 100%;
  margin-left: 1px;
  background: #fff;
  border: 1px solid #c4c4c4;
  border-right: 0;
}
.side-grip { align-self: flex-end; width: 10px; height: 8px; margin: 2px 0 -5px; }
.side-tool {
  display: grid;
  grid-template-columns: 16px 1fr;
  row-gap: 3px;
  align-items: center;
  text-align: center;
}
.side-tool svg { grid-column: 1 / -1; width: 28px; height: 28px; margin-left: 25px; }
.side-tool span { grid-row: 2; grid-column: 2; margin: 0 -4px 0 0; }
.side-tool .tri {
  grid-row: 2;
  grid-column: 1;
  justify-self: start;
  margin-left: 4px;
  border-width: 3px;
  border-bottom: 0;
  border-top-color: #555;
}
.side-tool.plain { row-gap: 1px; }
.side-tool.plain span { grid-column: 1 / -1; margin: 0 -8px 0 0; }
.side-tool.ruled {
  margin: -4px 0 -3px 3px;
  padding: 4px 0 2px;
  border-top: 1px solid #c9c9c9;
  border-bottom: 1px solid #c9c9c9;
}
.side-tool.ruled svg { margin-left: 22px; }
```
